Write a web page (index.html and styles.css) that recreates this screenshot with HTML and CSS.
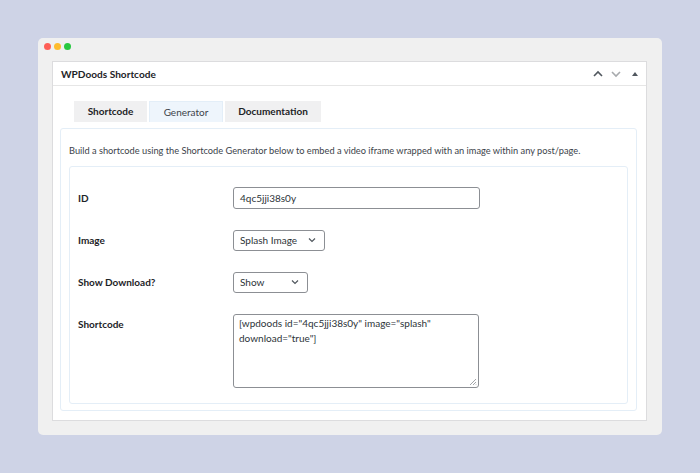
FILE: index.html
```html
<!DOCTYPE html>
<html>
<head>
<meta charset="utf-8">
<link rel="stylesheet" href="styles.css">
</head>
<body>
<div class="window">
  <div class="titlebar">
    <span class="dot red"></span><span class="dot yellow"></span><span class="dot green"></span>
  </div>
  <div class="panel">
    <div class="panel-header">
      <h2 class="panel-title">WPDoods Shortcode</h2>
      <div class="panel-actions">
        <svg class="act" width="12" height="10" viewBox="0 0 12 10"><path d="M2 7 L6 3 L10 7" fill="none" stroke="#50575e" stroke-width="1.6"/></svg>
        <svg class="act" width="12" height="10" viewBox="0 0 12 10"><path d="M2 3 L6 7 L10 3" fill="none" stroke="#a7aaad" stroke-width="1.6"/></svg>
        <svg class="act tri" width="10" height="10" viewBox="0 0 10 10"><path d="M2 7 L5 3 L8 7 Z" fill="#50575e"/></svg>
      </div>
    </div>
    <div class="panel-body">
      <div class="tabs">
        <div class="tab">Shortcode</div>
        <div class="tab active">Generator</div>
        <div class="tab">Documentation</div>
      </div>
      <div class="content">
        <p class="desc">Build a shortcode using the Shortcode Generator below to embed a video iframe wrapped with an image within any post/page.</p>
        <div class="form">
          <div class="row">
            <div class="label">ID</div>
            <div class="field"><div class="input">4qc5jji38s0y</div></div>
          </div>
          <div class="row">
            <div class="label">Image</div>
            <div class="field"><div class="select w-image">Splash Image<svg class="chev" width="10" height="8" viewBox="0 0 10 8"><path d="M2 2.5 L5 5.5 L8 2.5" fill="none" stroke="#50575e" stroke-width="1.2"/></svg></div></div>
          </div>
          <div class="row">
            <div class="label">Show Download?</div>
            <div class="field"><div class="select w-show">Show<svg class="chev" width="10" height="8" viewBox="0 0 10 8"><path d="M2 2.5 L5 5.5 L8 2.5" fill="none" stroke="#50575e" stroke-width="1.2"/></svg></div></div>
          </div>
          <div class="row top">
            <div class="label">Shortcode</div>
            <div class="field"><div class="textarea">[wpdoods id="4qc5jji38s0y" image="splash" download="true"]<svg class="grip" width="8" height="8" viewBox="0 0 8 8"><path d="M7 1 L1 7 M7 4 L4 7 M7 6.5 L6.5 7" stroke="#8c8f94" stroke-width="0.8"/></svg></div></div>
          </div>
        </div>
      </div>
    </div>
  </div>
</div>
</body>
</html>
```
FILE: styles.css
```css
* { box-sizing: border-box; }
html, body { margin: 0; }
body {
  width: 700px;
  height: 473px;
  background: #ced3e6;
  padding: 38px;
  font-family: Lato, "Noto Sans", sans-serif;
  color: #1d2327;
}
.window {
  width: 624px;
  height: 397px;
  background: #f0f0f0;
  border-radius: 5px;
  padding: 0 15px 0 14px;
}
.titlebar {
  height: 23px;
  display: flex;
  align-items: center;
  gap: 3px;
  padding-left: 6px;
  padding-bottom: 6px;
  margin-left: -14px;
}
.dot { width: 7px; height: 7px; border-radius: 50%; display: block; }
.red { background: #fe5f57; }
.yellow { background: #febc2e; }
.green { background: #28c840; }
.panel {
  background: #fff;
  border: 1px solid #dcdcde;
  height: 360px;
}
.panel-header {
  height: 24px;
  border-bottom: 1px solid #e6e6e6;
  display: flex;
  align-items: center;
  justify-content: space-between;
  padding: 0 6px 0 8px;
}
.panel-title {
  margin: 0;
  font-size: 10.1px;
  font-weight: 700;
  color: #1d2327;
}
.panel-actions { display: flex; align-items: center; gap: 6px; }
.act { display: block; }
.tri { margin-left: 2px; }
.panel-body { padding: 15px 9px 0 7px; }
.tabs { display: flex; gap: 2px; padding-left: 14px; }
.tab {
  height: 21px;
  width: 96px;
  text-align: center;
  background: #f0f0f1;
  font-size: 10px;
  font-weight: 700;
  line-height: 21px;
  color: #1d2327;
}
.tab:first-child { width: 73px; }
.tab.active {
  width: 74px;
  background: #eef5fc;
  font-weight: 400;
  color: #3c434a;
  border: 1px solid #e3eef8;
  border-bottom: none;
  line-height: 20px;
}
.content {
  margin-top: 6px;
  border: 1px solid #e4eef7;
  border-radius: 3px;
  height: 283px;
  padding: 14px 8px 0 8px;
}
.desc {
  margin: 0 0 7px 0;
  font-size: 9.25px;
  line-height: 16px;
  color: #3c434a;
}
.form {
  border: 1px solid #e4eef7;
  border-radius: 3px;
  height: 238px;
  padding: 10px 8px 0 8px;
}
.row {
  display: flex;
  align-items: center;
  height: 42px;
}
.row.top { align-items: flex-start; height: auto; padding-top: 11px; }
.label {
  width: 155px;
  font-size: 10px;
  font-weight: 700;
  color: #1d2327;
}
.row.top .label { line-height: 16px; padding-top: 2px; }
.field { flex: 1; }
.input {
  width: 247px;
  height: 22px;
  border: 1px solid #8c8f94;
  border-radius: 3px;
  font-size: 10px;
  line-height: 20px;
  padding: 0 6px;
  color: #2c3338;
}
.select {
  height: 21px;
  border: 1px solid #8c8f94;
  border-radius: 3px;
  font-size: 10px;
  line-height: 19px;
  padding: 0 6px;
  color: #2c3338;
  display: flex;
  align-items: center;
  justify-content: space-between;
}
.w-image { width: 92px; }
.w-show { width: 75px; }
.chev { display: block; margin-right: 1px; }
.textarea {
  position: relative;
  width: 246px;
  height: 74px;
  border: 1px solid #8c8f94;
  border-radius: 3px;
  font-size: 10px;
  line-height: 15px;
  padding: 1px 5px;
  color: #2c3338;
}
.grip { position: absolute; right: 1px; bottom: 1px; }
```
